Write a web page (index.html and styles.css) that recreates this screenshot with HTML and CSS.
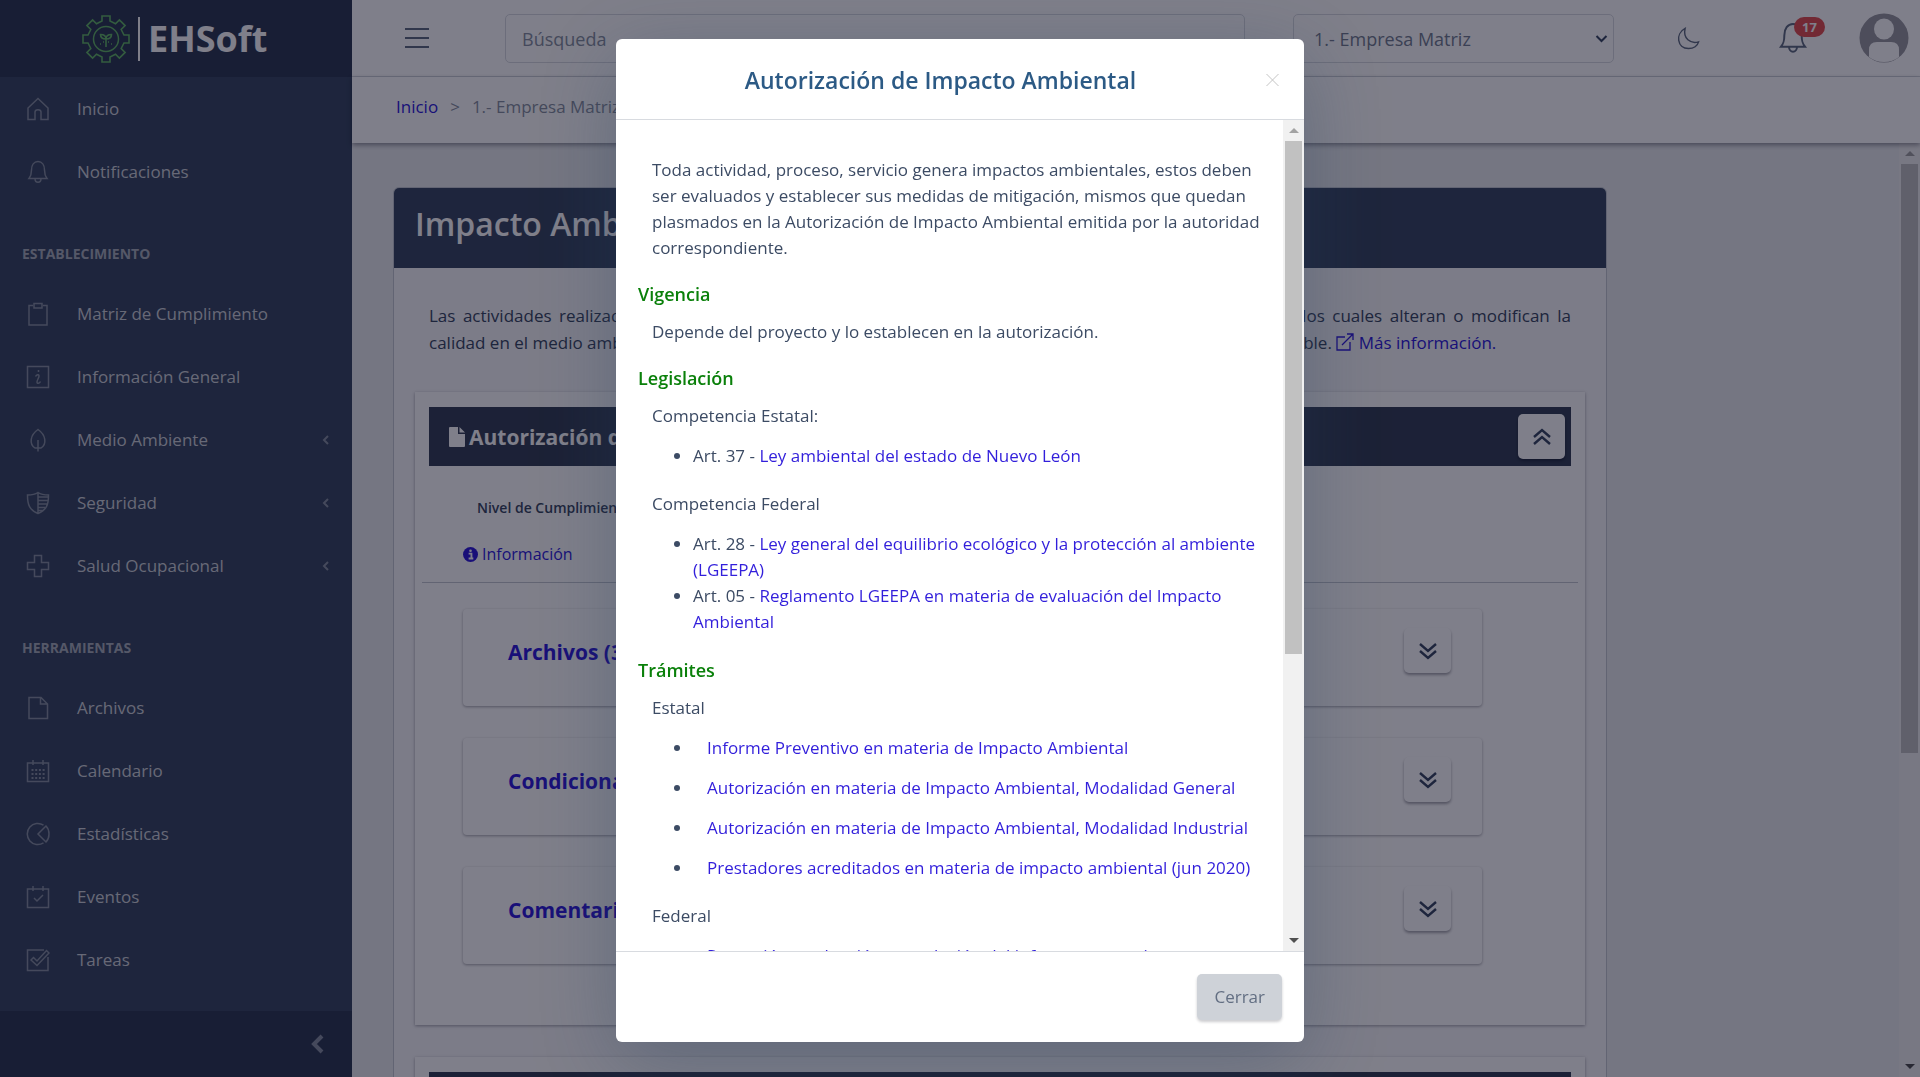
FILE: index.html
```html
<!DOCTYPE html>
<html lang="es">
<head>
    <meta charset="UTF-8">
    <meta name="viewport" content="width=device-width, initial-scale=1.0">
    <title>EHSoft - Impacto Ambiental</title>
    <link rel="stylesheet" href="styles.css">
</head>
<body>

    <!-- Iconos reutilizados -->
    <svg class="sprite" aria-hidden="true">
        <symbol id="chev-left" viewBox="0 0 10 12"><path d="M8 2 4 6l4 4" fill="none" stroke="currentColor" stroke-width="2"/></symbol>
        <symbol id="chev-down2" viewBox="0 0 20 20"><path d="m2 3 8 7 8-7M2 10l8 7 8-7" fill="none" stroke="currentColor" stroke-width="2.4"/></symbol>
        <symbol id="chev-up2" viewBox="0 0 20 20"><path d="m2 10 8-7 8 7M2 17l8-7 8 7" fill="none" stroke="currentColor" stroke-width="2.4"/></symbol>
        <symbol id="bell" viewBox="0 0 24 24"><path d="M3 18.5h18c-2-2.6-2.5-4-2.5-8.500C18.500 5 16 1.500 12 1.500S5.500 5 5.500 10c0 4.500-.5 5.900-2.500 8.500zM9 18.500c0 5 6 5 6 0" fill="none" stroke="currentColor" stroke-width="1.5"/></symbol>
    </svg>

    <div class="app">
        <aside class="sidebar">
            <div class="brand">
                <svg class="brand-gear" viewBox="0 0 48 48" fill="none" stroke="#67b868">
                    <path stroke-width="1.600" d="M20 6V1h8v5l5.500 2.800 3.900-3.900 5.700 5.700-3.900 3.900L42 20h5v8h-5l-2.800 5.500 3.900 3.900-5.700 5.700-3.900-3.900L28 42v5h-8v-5l-5.500-2.800-3.900 3.900-5.700-5.700 3.900-3.900L6 28H1v-8h5l2.800-5.500-3.900-3.900 5.700-5.700 3.900 3.900z"/>
                    <circle cx="24" cy="24" r="12.500" stroke-width="1.500"/>
                    <path stroke-width="1.600" d="M24 32v-8m0 0c-4 0-5.500-1.500-5.500-4.500 3.500 0 5.500 1.500 5.500 4.500zm0 0c4 0 5.500-1.500 5.500-4.500-3.500 0-5.500 1.500-5.500 4.500zM18 29h1m10 0h1M21 27h1m4 0h1"/>
                </svg>
                <span class="brand-line"></span>
                <span class="brand-name">EHSoft</span>
            </div>

            <nav class="menu">
                <a class="menu-item" href="#">
                    <svg viewBox="0 0 24 24"><path d="M2 22.500V11L12 1.500 22 11v11.500h-7V15c0-3-6-3-6 0v7.500z"/></svg>
                    <span>Inicio</span>
                </a>
                <a class="menu-item" href="#">
                    <svg viewBox="0 0 24 24"><use href="#bell"/></svg>
                    <span>Notificaciones</span>
                </a>

                <h6 class="menu-title">Establecimiento</h6>
                <a class="menu-item" href="#">
                    <svg viewBox="0 0 24 24"><path d="M7 3.500H3V23h18V3.500h-4M8 1.500h8v4.500H8z"/></svg>
                    <span>Matriz de Cumplimiento</span>
                </a>
                <a class="menu-item" href="#">
                    <svg viewBox="0 0 24 24"><path d="M1.500 1.500h21v21h-21zM9.500 11.500c1-2 3.500-2.500 3.500-.5 0 2-2 4-2 6s2.500 1.500 3.500-.5M12.500 5v2"/></svg>
                    <span>Información General</span>
                </a>
                <a class="menu-item" href="#">
                    <svg viewBox="0 0 24 24"><path d="M12 23.500V12M9 20c-6-4-5-13 3-18.500C20 7 21 16 15 20z"/></svg>
                    <span>Medio Ambiente</span>
                    <svg class="caret"><use href="#chev-left"/></svg>
                </a>
                <a class="menu-item" href="#">
                    <svg viewBox="0 0 24 24"><path d="M12 1.500C9 3.500 5 4 1.500 4c0 10 2 15 10.500 18.500C20.500 19 22.500 14 22.500 4 19 4 15 3.500 12 1.500zV22M12 6h10M12 9.500h10M12 13h9M12 16.500h7M12 19.500h5"/></svg>
                    <span>Seguridad</span>
                    <svg class="caret"><use href="#chev-left"/></svg>
                </a>
                <a class="menu-item" href="#">
                    <svg viewBox="0 0 24 24"><path d="M8.500 1.500h7v7h7v7h-7v7h-7v-7h-7v-7h7z"/></svg>
                    <span>Salud Ocupacional</span>
                    <svg class="caret"><use href="#chev-left"/></svg>
                </a>

                <h6 class="menu-title">Herramientas</h6>
                <a class="menu-item" href="#">
                    <svg viewBox="0 0 24 24"><path d="M3 1.500h12L21.500 8v14.500H3zM14.500 1.500V8h7"/></svg>
                    <span>Archivos</span>
                </a>
                <a class="menu-item" href="#">
                    <svg viewBox="0 0 24 24"><path d="M1.500 4h21v18.500h-21zM7 1v5M17 1v5"/><path d="M5.500 11h14M5.500 15h14M5.500 19h14" stroke-width="2" stroke-dasharray="2 1.700"/></svg>
                    <span>Calendario</span>
                </a>
                <a class="menu-item" href="#">
                    <svg viewBox="0 0 24 24"><path d="M17.500 3.200a10.500 10.500 0 1 0 0 17.600M20 4l-8 8 8 8c4-4 4-12 0-16z"/></svg>
                    <span>Estadísticas</span>
                </a>
                <a class="menu-item" href="#">
                    <svg viewBox="0 0 24 24"><path d="M1.500 4h21v18.500h-21zM7 1v5M17 1v5M8 13l3 3 6-6"/></svg>
                    <span>Eventos</span>
                </a>
                <a class="menu-item" href="#">
                    <svg viewBox="0 0 24 24"><path d="M18 2H1.500v20.500H22V9M5 12l2.500-2.500 3.500 3.500L20.500 2.500 23 5 11 17.500z"/></svg>
                    <span>Tareas</span>
                </a>
            </nav>

            <button class="minimizer" aria-label="Contraer menú">
                <svg viewBox="0 0 14 20"><path d="M12 2 4 10l8 8" fill="none" stroke="currentColor" stroke-width="4"/></svg>
            </button>
        </aside>

        <div class="wrapper">
            <header class="header">
                <button class="toggler" aria-label="Menú">
                    <svg viewBox="0 0 24 20"><path d="M0 1h24M0 10h24M0 19h24" stroke="currentColor" stroke-width="2"/></svg>
                </button>
                <input class="search" type="text" placeholder="Búsqueda" aria-label="Búsqueda">
                <div class="company">
                    <select aria-label="Empresa">
                        <option>1.- Empresa Matriz</option>
                    </select>
                    <svg viewBox="0 0 12 8"><path d="m1 1 5 5 5-5" fill="none" stroke="currentColor" stroke-width="2"/></svg>
                </div>
                <button class="theme" aria-label="Modo oscuro">
                    <svg viewBox="0 0 24 24"><path d="M8.500 1.500C-2 7 0 22.500 12 22.500c5.500 0 9.500-3 10.500-7C14 18 6 12 8.500 1.500z" fill="none" stroke="currentColor" stroke-width="1.500"/></svg>
                </button>
                <button class="alerts" aria-label="Notificaciones">
                    <svg><use href="#bell"/></svg>
                    <span class="badge">17</span>
                </button>
                <a class="avatar" href="#" aria-label="Perfil">
                    <svg viewBox="0 0 50 50">
                        <circle cx="25" cy="25" r="24.500" fill="#9a9aa0"/>
                        <ellipse cx="25" cy="16" rx="10" ry="10.500" fill="#fff"/>
                        <path d="M10 44V37q0-8 8-8h14q8 0 8 8v7q-6 5-15 5t-15-5z" fill="#fff"/>
                    </svg>
                </a>
            </header>

            <nav class="breadcrumb">
                <a href="#">Inicio</a>
                <span>&gt;</span>
                <span>1.- Empresa Matriz</span>
            </nav>

            <div class="content">
                <main class="main">
                    <section class="card">
                        <h1 class="card-header">Impacto Ambiental</h1>
                        <div class="card-body">
                            <p class="intro">Las actividades realizadas por el hombre generan impactos al ambiente, tanto positivos como negativos, los cuales alteran o modifican la calidad en el medio ambiente, por lo que es necesario evaluarlos para poder verificar si es ambientalmente viable. <a href="#"><svg viewBox="0 0 18 18"><path d="M9 4H1v13h13V9M6 12 16.500 1.500M11 1h6v6" fill="none" stroke="currentColor" stroke-width="1.300"/></svg> Más información.</a></p>

                            <article class="permit">
                                <div class="permit-bar">
                                    <h2>
                                        <svg viewBox="0 0 16 20"><path fill="currentColor" d="M0 1q0-1 1-1h8v7h7v12q0 1-1 1H1q-1 0-1-1zM10.500 0 16 5.500h-5.500z"/></svg>
                                        Autorización de Impacto Ambiental
                                    </h2>
                                    <button class="btn-icon" aria-label="Contraer"><svg><use href="#chev-up2"/></svg></button>
                                </div>
                                <p class="level">Nivel de Cumplimiento</p>
                                <a class="info" href="#">
                                    <svg viewBox="0 0 16 16"><circle cx="8" cy="8" r="8" fill="currentColor"/><path d="M6 7h3v5m-3 .2h5" fill="none" stroke="#fff" stroke-width="2"/><circle cx="8" cy="4" r="1.400" fill="#fff"/></svg>
                                    Información
                                </a>
                                <hr>
                                <div class="panels">
                                    <div class="panel">
                                        <a href="#">Archivos (3)</a>
                                        <button class="btn-icon" aria-label="Ver archivos"><svg><use href="#chev-down2"/></svg></button>
                                    </div>
                                    <div class="panel">
                                        <a href="#">Condicionantes</a>
                                        <button class="btn-icon" aria-label="Ver condicionantes"><svg><use href="#chev-down2"/></svg></button>
                                    </div>
                                    <div class="panel">
                                        <a href="#">Comentarios</a>
                                        <button class="btn-icon" aria-label="Ver comentarios"><svg><use href="#chev-down2"/></svg></button>
                                    </div>
                                </div>
                            </article>

                            <article class="permit">
                                <div class="permit-bar"></div>
                            </article>
                        </div>
                    </section>
                </main>
                <div class="scrollbar">
                    <span class="arrow up"></span>
                    <div class="track"><div class="thumb"></div></div>
                    <span class="arrow down"></span>
                </div>
            </div>
        </div>
    </div>

    <!-- Ventana de información -->
    <div class="backdrop">
        <div class="modal" role="dialog" aria-labelledby="modal-title">
            <div class="modal-header">
                <h4 id="modal-title">Autorización de Impacto Ambiental</h4>
                <button class="close" aria-label="Cerrar">
                    <svg viewBox="0 0 14 14"><path d="m1 1 12 12M13 1 1 13" stroke="currentColor" stroke-width="1"/></svg>
                </button>
            </div>
            <div class="modal-main">
                <div class="modal-body">
                    <p>Toda actividad, proceso, servicio genera impactos ambientales, estos deben ser evaluados y establecer sus medidas de mitigación, mismos que quedan plasmados en la Autorización de Impacto Ambiental emitida por la autoridad correspondiente.</p>

                    <h5>Vigencia</h5>
                    <p>Depende del proyecto y lo establecen en la autorización.</p>

                    <h5>Legislación</h5>
                    <p>Competencia Estatal:</p>
                    <ul>
                        <li>Art. 37 - <a href="#">Ley ambiental del estado de Nuevo León</a></li>
                    </ul>
                    <p>Competencia Federal</p>
                    <ul>
                        <li>Art. 28 - <a href="#">Ley general del equilibrio ecológico y la protección al ambiente (LGEEPA)</a></li>
                        <li>Art. 05 - <a href="#">Reglamento LGEEPA en materia de evaluación del Impacto Ambiental</a></li>
                    </ul>

                    <h5>Trámites</h5>
                    <p>Estatal</p>
                    <ul class="links">
                        <li><a href="#">Informe Preventivo en materia de Impacto Ambiental</a></li>
                        <li><a href="#">Autorización en materia de Impacto Ambiental, Modalidad General</a></li>
                        <li><a href="#">Autorización en materia de Impacto Ambiental, Modalidad Industrial</a></li>
                        <li><a href="#">Prestadores acreditados en materia de impacto ambiental (jun 2020)</a></li>
                    </ul>
                    <p>Federal</p>
                    <ul class="links">
                        <li><a href="#">Recepción, evaluación y resolución del informe preventivo</a></li>
                    </ul>
                </div>
                <div class="scrollbar">
                    <span class="arrow up"></span>
                    <div class="track"><div class="thumb"></div></div>
                    <span class="arrow down"></span>
                </div>
            </div>
            <div class="modal-footer">
                <button class="btn-close">Cerrar</button>
            </div>
        </div>
    </div>

</body>
</html>
```

FILE: styles.css
```css
* {
    box-sizing: border-box;
}
body {
    margin: 0;
    font-family: "Open Sans", "Noto Sans", sans-serif;
    font-size: 17px;
    line-height: 26px;
    color: #3c4b64;
    background: #ebedef;
}
a {
    color: #321fdb;
    text-decoration: none;
}
button, input, select {
    font: inherit;
    color: inherit;
}
button {
    border: 0;
    padding: 0;
    background: none;
    cursor: pointer;
}
svg {
    display: block;
}
h1, h2, h4, h5, h6, p {
    margin: 0;
}
.sprite {
    display: none;
}
.app {
    display: flex;
    height: 100vh;
    overflow: hidden;
}

/* Menú lateral */
.sidebar {
    display: flex;
    flex-direction: column;
    flex: none;
    width: 352px;
    background: #3c4b64;
    color: #cfd2d8;
}
.brand {
    display: flex;
    align-items: center;
    gap: 8px;
    height: 77px;
    padding-left: 82px;
    background: #303c54;
}
.brand-gear {
    width: 48px;
    height: 48px;
}
.brand-line {
    width: 2px;
    height: 44px;
    background: #fff;
}
.brand-name {
    font-size: 36px;
    font-weight: 700;
    color: #fff;
}
.menu {
    flex: 1;
    overflow: hidden;
}
.menu-item {
    display: flex;
    align-items: center;
    gap: 27px;
    height: 63px;
    padding: 0 22px 0 26px;
    color: #cfd2d8;
}
.menu-item svg {
    width: 24px;
    height: 24px;
    fill: none;
    stroke: #8a93a2;
    stroke-width: 1.5;
    color: #8a93a2;
}
.menu-item .caret {
    width: 10px;
    height: 12px;
    margin-left: auto;
}
.menu-title {
    padding: 38px 22px 15px;
    font-size: 14px;
    font-weight: 700;
    text-transform: uppercase;
    color: #aab0bb;
}
.minimizer {
    display: flex;
    align-items: center;
    justify-content: flex-end;
    height: 66px;
    padding-right: 28px;
    background: #303c54;
    color: #8a93a2;
}
.minimizer svg {
    width: 14px;
    height: 20px;
}

/* Cabecera */
.wrapper {
    display: flex;
    flex-direction: column;
    flex: 1;
    min-width: 0;
}
.header {
    display: flex;
    align-items: center;
    height: 77px;
    padding: 0 11px 0 53px;
    background: #fff;
    border-bottom: 1px solid #d8dbe0;
    color: #636f83;
}
.toggler svg {
    width: 24px;
    height: 20px;
}
.search, .company select {
    height: 49px;
    border: 1px solid #d8dbe0;
    border-radius: 5px;
    background: #fff;
    color: #768192;
    font-size: 18px;
}
.search {
    flex: 1;
    min-width: 0;
    margin: 0 48px 0 76px;
    padding: 2px 16px 0;
}
.search::placeholder {
    color: #8a93a2;
}
.company {
    position: relative;
    width: 321px;
}
.company select {
    width: 100%;
    padding: 2px 20px 0;
    appearance: none;
}
.company svg {
    position: absolute;
    right: 6px;
    top: 21px;
    width: 13px;
    height: 8px;
    color: #3c4b64;
}
.theme {
    margin-left: 63px;
}
.theme svg {
    width: 23px;
    height: 23px;
}
.alerts {
    position: relative;
    margin: 0 50px 0 77px;
}
.alerts svg {
    width: 32px;
    height: 32px;
}
.badge {
    position: absolute;
    left: 17px;
    top: -5px;
    width: 31px;
    border-radius: 10px;
    background: #e55353;
    color: #fff;
    font-size: 13px;
    font-weight: 700;
    line-height: 20px;
}
.avatar svg {
    width: 50px;
    height: 50px;
}
.breadcrumb {
    display: flex;
    align-items: center;
    gap: 12px;
    height: 66px;
    padding: 0 44px 6px;
    background: #fff;
    color: #8a93a2;
    box-shadow: 0 2px 5px rgba(0, 0, 21, .4);
    z-index: 1;
}

/* Contenido */
.content {
    display: flex;
    flex: 1;
    min-height: 0;
}
.main {
    flex: 1;
    padding: 44px 41px;
    overflow: hidden;
}
.card {
    max-width: 1214px;
    border: 1px solid #c4c9d0;
    border-radius: 6px;
    background: #f8f8fa;
}
.card-header {
    height: 80px;
    padding: 10px 21px;
    border-radius: 5px 5px 0 0;
    background: #3c4b64;
    color: #fff;
    font-size: 32px;
    font-weight: 600;
    line-height: 52px;
}
.card-body {
    padding: 34px 21px;
}
.intro {
    padding: 0 14px;
    line-height: 27px;
    text-align: justify;
}
.intro svg {
    display: inline-block;
    width: 18px;
    height: 18px;
    vertical-align: -2px;
}
.permit {
    margin: 36px 0 32px;
    padding: 15px 14px 61px;
    background: #fff;
    box-shadow: 0 1px 3px rgba(0, 0, 21, .35);
}
.permit-bar {
    display: flex;
    align-items: center;
    justify-content: space-between;
    height: 59px;
    padding: 0 6px 0 20px;
    background: #384358;
    color: #fff;
}
.permit-bar h2 {
    display: flex;
    align-items: center;
    gap: 4px;
    font-size: 21px;
    font-weight: 700;
}
.permit-bar h2 svg {
    width: 16px;
    height: 20px;
}
.permit + .permit {
    margin-top: 32px;
}
.btn-icon {
    display: flex;
    align-items: center;
    justify-content: center;
    width: 47px;
    height: 45px;
    border-radius: 5px;
    background: #fff;
    box-shadow: 0 2px 3px rgba(0, 0, 21, .35);
    color: #3c4b64;
}
.btn-icon svg {
    width: 20px;
    height: 20px;
}
.level {
    padding: 29px 48px 20px;
    font-size: 14px;
    font-weight: 600;
}
.info {
    display: flex;
    align-items: center;
    gap: 4px;
    padding: 0 34px;
    font-size: 16px;
}
.info svg {
    width: 15px;
    height: 15px;
}
hr {
    margin: 15px -7px 26px;
    border: 0;
    border-top: 1px solid #c4c9d0;
}
.panels {
    display: flex;
    flex-direction: column;
    gap: 32px;
    padding: 0 89px 0 34px;
}
.panel {
    display: flex;
    justify-content: space-between;
    height: 97px;
    padding: 19px 31px 0 45px;
    border-radius: 4px;
    background: #fff;
    box-shadow: 0 1px 3px rgba(0, 0, 21, .35);
}
.panel a {
    padding-top: 11px;
    font-size: 21px;
    font-weight: 700;
}

/* Barra de desplazamiento */
.scrollbar {
    display: flex;
    flex-direction: column;
    flex: none;
    width: 21px;
    background: #f1f1f1;
}
.track {
    flex: 1;
    padding: 0 2px;
}
.thumb {
    height: 66%;
    background: #c1c1c1;
}
.modal .thumb {
    height: 65%;
}
.arrow {
    display: flex;
    align-items: center;
    justify-content: center;
    height: 21px;
}
.arrow::before {
    content: "";
    border: 5px solid transparent;
}
.up::before {
    border-top: 0;
    border-bottom-color: #a3a3a3;
}
.down::before {
    border-bottom: 0;
    border-top-color: #505050;
}

/* Modal */
.backdrop {
    position: fixed;
    inset: 0;
    z-index: 10;
    display: flex;
    justify-content: center;
    padding: 39px 20px 35px;
    background: rgba(0, 0, 21, .5);
}
.modal {
    display: flex;
    flex-direction: column;
    width: 100%;
    max-width: 688px;
    border-radius: 6px;
    background: #fff;
    box-shadow: 0 20px 80px rgba(40, 65, 95, .35);
}
.modal-header {
    display: flex;
    align-items: center;
    height: 81px;
    padding: 2px 24px 0 0;
    border-bottom: 1px solid #d8dbe0;
}
.modal-header h4 {
    flex: 1;
    font-size: 23px;
    font-weight: 600;
    text-align: center;
    color: #2c5a85;
}
.close {
    color: #c4c4c4;
}
.close svg {
    width: 15px;
    height: 14px;
}
.modal-main {
    display: flex;
    flex: 1;
    min-height: 0;
}
.modal-body {
    flex: 1;
    padding: 37px 18px 0 22px;
    overflow: hidden;
}
.modal-body p {
    padding-left: 14px;
}
.modal-body h5 {
    margin: 20px 0 12px;
    font-size: 18px;
    font-weight: 600;
    color: #0a800a;
}
.modal-body ul {
    margin: 14px 0 22px;
    padding-left: 55px;
}
.links li {
    margin-bottom: 14px;
    padding-left: 14px;
}
.modal-footer {
    display: flex;
    justify-content: flex-end;
    padding: 22px;
    border-top: 1px solid #d8dbe0;
}
.btn-close {
    padding: 10px 17px;
    border-radius: 5px;
    background: #ced2d8;
    box-shadow: 0 2px 3px rgba(0, 0, 21, .2);
    color: #636f83;
    font-size: 17px;
}
```
